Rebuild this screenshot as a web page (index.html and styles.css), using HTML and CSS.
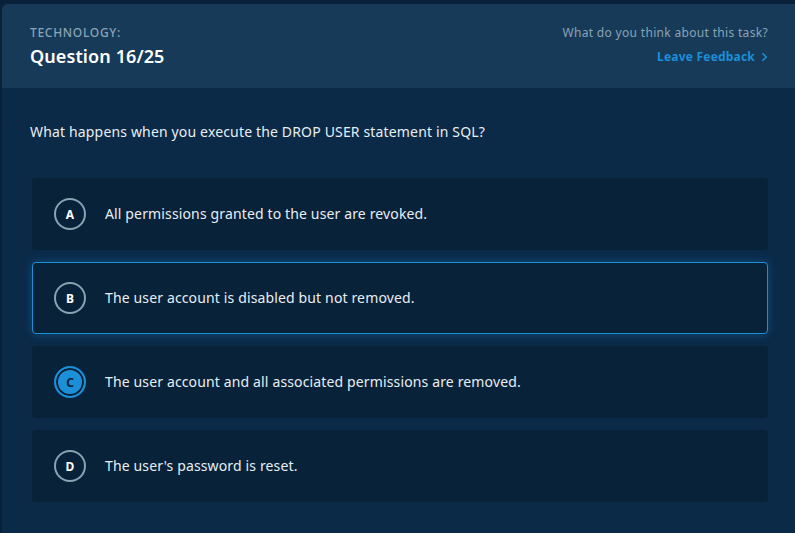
FILE: index.html
```html
<!DOCTYPE html>
<html lang="en">
<head>
<meta charset="utf-8">
<link rel="stylesheet" href="styles.css">
</head>
<body>
<div class="card">
  <header class="head">
    <div class="head-left">
      <div class="category">TECHNOLOGY:</div>
      <div class="title">Question 16/25</div>
    </div>
    <div class="head-right">
      <div class="ask">What do you think about this task?</div>
      <a class="feedback">Leave Feedback
        <svg class="chev" width="7" height="10" viewBox="0 0 7 10"><path d="M1.5 1.2 L5.2 5 L1.5 8.8" fill="none" stroke="currentColor" stroke-width="1.6"/></svg>
      </a>
    </div>
  </header>
  <main class="body">
    <p class="question">What happens when you execute the DROP USER statement in SQL?</p>
    <ul class="options">
      <li class="opt"><span class="badge">A</span><span class="txt">All permissions granted to the user are revoked.</span></li>
      <li class="opt hover"><span class="badge">B</span><span class="txt">The user account is disabled but not removed.</span></li>
      <li class="opt"><span class="badge selected">C</span><span class="txt">The user account and all associated permissions are removed.</span></li>
      <li class="opt"><span class="badge">D</span><span class="txt">The user's password is reset.</span></li>
    </ul>
  </main>
</div>
</body>
</html>
```

FILE: styles.css
```css
html, body {
  margin: 0;
  padding: 0;
  background: #0a2239;
  height: 100%;
  overflow: hidden;
}
body {
  font-family: "Noto Sans", "Open Sans", sans-serif;
  color: #e8eef2;
}
.card {
  margin: 4px 0 0 2px;
  background: #0b2a48;
  border-radius: 6px 0 0 0;
  min-height: 560px;
}
.head {
  background: #163a58;
  height: 84px;
  box-sizing: border-box;
  padding: 21px 27px 0 28px;
  display: flex;
  justify-content: space-between;
  border-radius: 6px 0 0 0;
}
.category {
  font-size: 12px;
  font-weight: 500;
  line-height: 15px;
  letter-spacing: 0.7px;
  color: #8ba3b6;
}
.title {
  font-size: 18px;
  font-weight: 600;
  line-height: 24px;
  margin-top: 4px;
  letter-spacing: 0.1px;
  color: #ffffff;
}
.head-right {
  text-align: right;
}
.ask {
  font-size: 12px;
  line-height: 15px;
  letter-spacing: 0.32px;
  color: #8ba3b6;
}
.feedback {
  display: inline-flex;
  align-items: center;
  gap: 6px;
  margin-top: 9px;
  font-size: 12px;
  font-weight: 700;
  line-height: 16px;
  color: #1b8fd8;
  letter-spacing: 0.2px;
}
.chev {
  display: block;
}
.body {
  padding: 0 27px 0 28px;
}
.question {
  margin: 0;
  padding-top: 34px;
  font-size: 14px;
  line-height: 20px;
  letter-spacing: 0.16px;
  color: #e8eef2;
}
.options {
  list-style: none;
  margin: 0;
  padding: 0 0 0 2px;
  margin-top: 36px;
  display: flex;
  flex-direction: column;
  gap: 12px;
}
.opt {
  height: 72px;
  box-sizing: border-box;
  background: #08223a;
  border-radius: 4px;
  display: flex;
  align-items: center;
  padding-left: 21px;
  border: 1px solid transparent;
}
.opt.hover {
  border-color: #1b8fd8;
  box-shadow: 0 0 10px rgba(27, 143, 216, 0.35);
}
.badge {
  width: 32px;
  height: 32px;
  box-sizing: border-box;
  border: 2px solid #8aa3b3;
  border-radius: 50%;
  display: flex;
  align-items: center;
  justify-content: center;
  font-size: 12px;
  font-weight: 700;
  color: #ffffff;
  flex: none;
}
.badge.selected {
  border-color: #1b8fd8;
  background: #1b8fd8;
  box-shadow: inset 0 0 0 2px #08223a;
  color: #0a2239;
}
.txt {
  margin-left: 19px;
  font-size: 14px;
  line-height: 20px;
  letter-spacing: 0.14px;
  color: #e8eef2;
}
```
